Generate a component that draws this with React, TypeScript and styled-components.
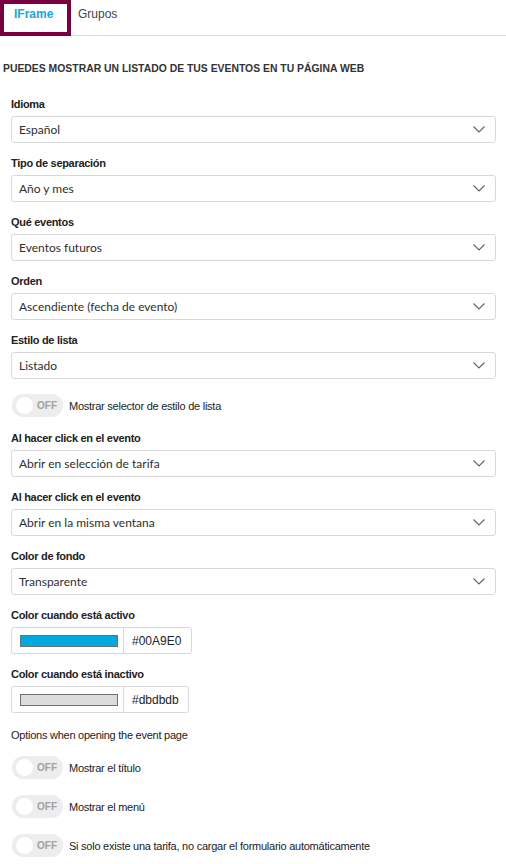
import React from "react";
import styled, { createGlobalStyle } from "styled-components";

const Global = createGlobalStyle`
  html, body { margin: 0; padding: 0; background: #fff; }
  body { font-family: "Liberation Sans", Arial, sans-serif; color: #333; }
`;

const Page = styled.div`
  width: 506px;
  display: flex;
  flex-direction: column;
`;

const Tabs = styled.div`
  display: flex;
  align-items: flex-start;
  height: 36px;
  border-bottom: 1px solid #dcdcdc;
  box-sizing: border-box;
`;

const Tab = styled.div<{ $active?: boolean }>`
  box-sizing: border-box;
  padding: ${(p) => (p.$active ? "3px 0 0 10px" : "7px 0 0 7px")};
  width: ${(p) => (p.$active ? "71px" : "auto")};
  height: ${(p) => (p.$active ? "36px" : "auto")};
  border: ${(p) => (p.$active ? "4px solid #7b003f" : "none")};
  background: #fff;
  font-size: 12px;
  line-height: 14px;
  font-weight: ${(p) => (p.$active ? 700 : 400)};
  color: ${(p) => (p.$active ? "#1aa6dc" : "#444")};
`;

const Heading = styled.h2`
  margin: 26px 0 0 3px;
  font-size: 10.4px;
  line-height: 13px;
  font-weight: 700;
  color: #333;
  text-transform: uppercase;
`;

const Form = styled.div`
  display: flex;
  flex-direction: column;
  padding: 22px 10px 0 11px;
`;

const Field = styled.div`
  display: flex;
  flex-direction: column;
  margin-bottom: 13px;
`;

const Label = styled.label`
  font-size: 11px;
  font-weight: 700;
  letter-spacing: -0.3px;
  color: #222;
  line-height: 14px;
  margin-bottom: 5px;
`;

const PlainLabel = styled.div`
  font-size: 11px;
  letter-spacing: -0.25px;
  line-height: 14px;
  color: #222;
  margin: 2px 0 14px;
`;

const SelectBox = styled.div`
  box-sizing: border-box;
  height: 27px;
  width: 485px;
  border: 1px solid #d9d9d9;
  border-radius: 3px;
  display: flex;
  align-items: center;
  justify-content: space-between;
  padding: 0 10px 0 7px;
  font-family: "Lato", "Open Sans", sans-serif;
  font-size: 12px;
  color: #2e2e2e;
`;

const Chevron = () => (
  <svg width="12" height="7" viewBox="0 0 12 7">
    <path d="M0.5 0.5 L6 6 L11.5 0.5" fill="none" stroke="#5a6270" strokeWidth="1.1" />
  </svg>
);

const Select = ({ value }: { value: string }) => (
  <SelectBox>
    <span>{value}</span>
    <Chevron />
  </SelectBox>
);

const ToggleRow = styled.div<{ $standalone?: boolean }>`
  display: flex;
  align-items: center;
  gap: 6px;
  margin: ${(p) => (p.$standalone ? "2px 0 14px" : "0")};
  font-size: 11px;
  letter-spacing: -0.25px;
  color: #222;
`;

const ToggleGroup = styled.div`
  display: flex;
  flex-direction: column;
  gap: 16px;
`;

const ToggleTrack = styled.div`
  box-sizing: border-box;
  width: 51px;
  height: 23px;
  margin-left: 1px;
  border-radius: 12px;
  background: #ededed;
  display: flex;
  align-items: center;
  padding-left: 4px;
  gap: 4px;
  flex-shrink: 0;
`;

const Knob = styled.div`
  width: 17px;
  height: 17px;
  border-radius: 50%;
  background: #fff;
`;

const OffText = styled.span`
  font-size: 10px;
  font-weight: 700;
  letter-spacing: 0;
  color: #a0a0a0;
`;

const Toggle = ({ label, standalone }: { label: string; standalone?: boolean }) => (
  <ToggleRow $standalone={standalone}>
    <ToggleTrack>
      <Knob />
      <OffText>OFF</OffText>
    </ToggleTrack>
    <span>{label}</span>
  </ToggleRow>
);

const ColorBox = styled.div<{ $w: number }>`
  box-sizing: border-box;
  width: ${(p) => p.$w}px;
  height: 27px;
  border: 1px solid #d9d9d9;
  border-radius: 3px;
  display: flex;
  align-items: center;
`;

const SwatchCell = styled.div`
  box-sizing: border-box;
  height: 100%;
  padding: 0 5px 0 8px;
  display: flex;
  align-items: center;
  border-right: 1px solid #d9d9d9;
`;

const Swatch = styled.div<{ $c: string }>`
  box-sizing: border-box;
  width: 98px;
  height: 12px;
  background: ${(p) => p.$c};
  border: 1px solid #707070;
`;

const HexText = styled.span`
  padding-left: 8px;
  font-size: 12px;
  color: #222;
`;

const ColorInput = ({ color, text, w }: { color: string; text: string; w: number }) => (
  <ColorBox $w={w}>
    <SwatchCell>
      <Swatch $c={color} />
    </SwatchCell>
    <HexText>{text}</HexText>
  </ColorBox>
);

export default function App() {
  return (
    <Page>
      <Global />
      <Tabs>
        <Tab $active>IFrame</Tab>
        <Tab>Grupos</Tab>
      </Tabs>
      <Heading>Puedes mostrar un listado de tus eventos en tu página web</Heading>
      <Form>
        <Field>
          <Label>Idioma</Label>
          <Select value="Español" />
        </Field>
        <Field>
          <Label>Tipo de separación</Label>
          <Select value="Año y mes" />
        </Field>
        <Field>
          <Label>Qué eventos</Label>
          <Select value="Eventos futuros" />
        </Field>
        <Field>
          <Label>Orden</Label>
          <Select value="Ascendiente (fecha de evento)" />
        </Field>
        <Field>
          <Label>Estilo de lista</Label>
          <Select value="Listado" />
        </Field>
        <Toggle standalone label="Mostrar selector de estilo de lista" />
        <Field>
          <Label>Al hacer click en el evento</Label>
          <Select value="Abrir en selección de tarifa" />
        </Field>
        <Field>
          <Label>Al hacer click en el evento</Label>
          <Select value="Abrir en la misma ventana" />
        </Field>
        <Field>
          <Label>Color de fondo</Label>
          <Select value="Transparente" />
        </Field>
        <Field>
          <Label>Color cuando está activo</Label>
          <ColorInput color="#00A9E0" text="#00A9E0" w={181} />
        </Field>
        <Field>
          <Label>Color cuando está inactivo</Label>
          <ColorInput color="#dbdbdb" text="#dbdbdb" w={178} />
        </Field>
        <PlainLabel>Options when opening the event page</PlainLabel>
        <ToggleGroup>
          <Toggle label="Mostrar el título" />
          <Toggle label="Mostrar el menú" />
          <Toggle label="Si solo existe una tarifa, no cargar el formulario automáticamente" />
        </ToggleGroup>
      </Form>
    </Page>
  );
}
